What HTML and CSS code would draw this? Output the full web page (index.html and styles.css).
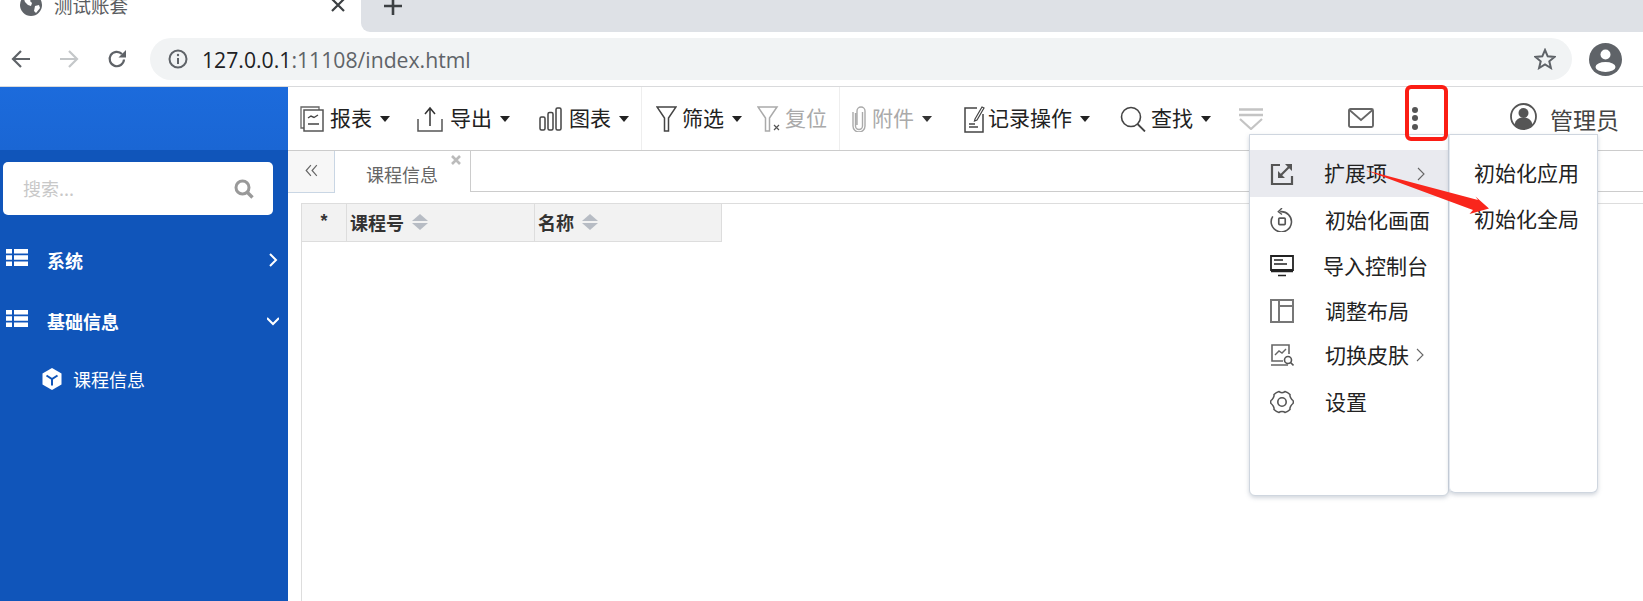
FILE: index.html
```html
<!DOCTYPE html>
<html lang="zh">
<head>
<meta charset="utf-8">
<title>测试账套</title>
<link rel="stylesheet" href="styles.css">
</head>
<body>
<header class="chrome">
  <div class="tabstrip">
    <div class="btab">
      <svg class="globe" viewBox="0 0 22 22"><circle cx="11" cy="11" r="11" fill="#5f6368"/><path d="M4 5l5-3 3 2-2 3 2 2-1 3-3-1-3-3zM15 12l4-1 1 3-4 5-2-2z" fill="#fff"/></svg>
      <span class="btab-title">测试账套</span>
      <svg class="btab-x" viewBox="0 0 14 14"><path d="M1 1l12 12M13 1L1 13" stroke="#3c4043" stroke-width="2.2" fill="none"/></svg>
    </div>
    <div class="strip-rest">
      <svg class="plus" viewBox="0 0 18 18"><path d="M9 0v18M0 9h18" stroke="#3c4043" stroke-width="2.6" fill="none"/></svg>
    </div>
  </div>
  <div class="navbar">
    <svg class="nav-ic" viewBox="0 0 20 20"><path d="M19 10H2M10 2l-8 8 8 8" stroke="#5f6368" stroke-width="2.2" fill="none"/></svg>
    <svg class="nav-ic nav-fwd" viewBox="0 0 20 20"><path d="M1 10h17M10 2l8 8-8 8" stroke="#c4c7c9" stroke-width="2.2" fill="none"/></svg>
    <svg class="nav-ic nav-reload" viewBox="0 0 20 20"><path d="M17 10.500a7.200 7.200 0 1 1-2-5.500" stroke="#5f6368" stroke-width="2.200" fill="none"/><path d="M19 1v7.500h-7.500z" fill="#5f6368"/></svg>
    <div class="omnibox">
      <svg class="info" viewBox="0 0 20 20"><circle cx="10" cy="10" r="8.500" stroke="#5f6368" stroke-width="2" fill="none"/><path d="M10 9v6" stroke="#5f6368" stroke-width="2"/><circle cx="10" cy="6" r="1.200" fill="#5f6368"/></svg>
      <span class="url"><span class="url-host">127.0.0.1</span>:11108/index.html</span>
      <svg class="star" viewBox="0 0 22 22"><path d="M11 2l2.700 6.300 6.800.6-5.200 4.400 1.600 6.700L11 16.400 5.100 20l1.600-6.700L1.500 8.900l6.800-.6z" stroke="#5f6368" stroke-width="2" fill="none"/></svg>
    </div>
    <svg class="avatar" viewBox="0 0 33 33"><circle cx="16.500" cy="16.500" r="16.500" fill="#5f6368"/><circle cx="16.500" cy="11.500" r="5" fill="#fff"/><ellipse cx="16.500" cy="24" rx="10" ry="5" fill="#fff"/></svg>
  </div>
</header>

<div class="app">
  <aside class="sidebar">
    <div class="side-head"></div>
    <div class="side-body">
      <div class="search">
        <span class="search-ph">搜索...</span>
        <svg class="search-ic" viewBox="0 0 20 20"><circle cx="8.500" cy="8.500" r="6.500" stroke="#999" stroke-width="3" fill="none"/><path d="M13.500 13.500l5 5" stroke="#999" stroke-width="3.400"/></svg>
      </div>
      <div class="nav-item">
        <svg class="list-ic" viewBox="0 0 22 17"><path d="M0 0h6v4.500H0zM8 0h14v4.500H8zM0 6.200h6v4.500H0zM8 6.200h14v4.500H8zM0 12.400h6V17H0zM8 12.400h14V17H8z" fill="#fff"/></svg>
        <span class="nav-label">系统</span>
        <svg class="chev" viewBox="0 0 12 14"><path d="M3 1l6 6-6 6" stroke="#fff" stroke-width="2" fill="none"/></svg>
      </div>
      <div class="nav-item">
        <svg class="list-ic" viewBox="0 0 22 17"><path d="M0 0h6v4.500H0zM8 0h14v4.500H8zM0 6.200h6v4.500H0zM8 6.200h14v4.500H8zM0 12.400h6V17H0zM8 12.400h14V17H8z" fill="#fff"/></svg>
        <span class="nav-label">基础信息</span>
        <svg class="chev" viewBox="0 0 12 14"><path d="M0 4l6 6 6-6" stroke="#fff" stroke-width="2" fill="none"/></svg>
      </div>
      <div class="nav-sub">
        <svg class="cube" viewBox="0 0 20 22"><path d="M10 0l9.500 5.500v11L10 22 .5 16.500v-11z" fill="#fff"/><path d="M4.500 7.500L10 11l5.500-3.500M10 11v6.500" stroke="#1055ba" stroke-width="2" fill="none"/></svg>
        <span>课程信息</span>
      </div>
    </div>
  </aside>

  <main class="main">
    <div class="toolbar">
      <div class="tool">
        <svg class="tic tic-report" viewBox="0 0 24 26"><path d="M4 22H1V1h18v3" stroke="#666" stroke-width="1.300" fill="none"/><path d="M4 4h19v21H4z" stroke="#555" stroke-width="1.500" fill="#fff"/><path d="M8 12l3-2 3 1.500 4-2.500M8 18h11" stroke="#444" stroke-width="1.400" fill="none"/></svg>
        <span>报表</span><i class="caret"></i>
      </div>
      <div class="tool t-export">
        <svg class="tic tic-export" viewBox="0 0 26 26"><path d="M1 13v12h24V13" stroke="#555" stroke-width="1.500" fill="none"/><path d="M13 20V3M8 8l5-6 5 6" stroke="#333" stroke-width="1.500" fill="none"/></svg>
        <span>导出</span><i class="caret"></i>
      </div>
      <div class="tool t-chart">
        <svg class="tic tic-chart" viewBox="0 0 23 24"><rect x="1" y="10" width="5" height="13" rx="1.500" stroke="#444" stroke-width="1.500" fill="none"/><rect x="9" y="5.500" width="5" height="17.500" rx="1.500" stroke="#444" stroke-width="1.500" fill="none"/><rect x="17" y="1" width="5" height="22" rx="1.500" stroke="#444" stroke-width="1.500" fill="none"/></svg>
        <span>图表</span><i class="caret"></i>
      </div>
      <div class="tool-sep t-sep1"></div>
      <div class="tool t-filter">
        <svg class="tic tic-filter" viewBox="0 0 21 26"><path d="M1 1h19l-7.500 11v13h-4V12z" stroke="#444" stroke-width="1.500" fill="none"/></svg>
        <span>筛选</span><i class="caret"></i>
      </div>
      <div class="tool t-reset muted">
        <svg class="tic tic-reset" viewBox="0 0 23 26"><path d="M1 1h19l-7.500 11v13h-4V12z" stroke="#aaa" stroke-width="1.500" fill="none"/><path d="M17 19l5 5M22 19l-5 5" stroke="#555" stroke-width="1.200"/></svg>
        <span>复位</span>
      </div>
      <div class="tool-sep t-sep2"></div>
      <div class="tool t-attach muted">
        <svg class="tic tic-attach" viewBox="0 0 14 26"><path d="M3.500 7v13a3.500 3.500 0 0 0 7 0V6M1 6v14a6 6 0 0 0 12 0V5a4 4 0 0 0-8 0v14" stroke="#aaa" stroke-width="1.400" fill="none"/></svg>
        <span>附件</span><i class="caret"></i>
      </div>
      <div class="tool t-record">
        <svg class="tic tic-record" viewBox="0 0 21 28"><path d="M13 3H1v24h18V9" stroke="#444" stroke-width="1.500" fill="none"/><path d="M11 14l7-12 2 1-7 12-2.500 1z" stroke="#444" stroke-width="1.200" fill="#fff"/><path d="M5 19h6M5 22h9" stroke="#444" stroke-width="1.500"/></svg>
        <span>记录操作</span><i class="caret"></i>
      </div>
      <div class="tool t-find">
        <svg class="tic tic-find" viewBox="0 0 26 26"><circle cx="11" cy="11" r="9.500" stroke="#444" stroke-width="1.600" fill="none"/><path d="M17.500 18l7.500 7.500" stroke="#444" stroke-width="1.800"/></svg>
        <span>查找</span><i class="caret"></i>
      </div>
      <svg class="tic tic-more t-more" viewBox="0 0 26 22"><path d="M1 1.500h24M1 7h24" stroke="#c4c4c4" stroke-width="2.400"/><path d="M2 11l11 10 11-10" stroke="#c4c4c4" stroke-width="2.200" fill="none"/></svg>
      <svg class="tic tic-mail t-mail" viewBox="0 0 26 20"><rect x="1" y="1" width="24" height="18" rx="1.500" stroke="#666" stroke-width="1.900" fill="none"/><path d="M1.500 2l11.500 10L24.500 2" stroke="#666" stroke-width="1.700" fill="none"/></svg>
      <div class="dots"><i></i><i></i><i></i></div>
      <svg class="tic tic-user t-user" viewBox="0 0 27 27"><circle cx="13.500" cy="13.500" r="12.500" stroke="#555" stroke-width="1.800" fill="#fff"/><circle cx="13.500" cy="10" r="5" fill="#555"/><path d="M4.500 22c1-6 5-7.500 9-7.500s8 1.500 9 7.500a12.500 12.500 0 0 1-18 0z" fill="#555"/></svg>
      <span class="user-name">管理员</span>
    </div>

    <div class="tabs">
      <div class="collapse">
        <svg viewBox="0 0 11 11"><path d="M5 1L1 5.500 5 10M10 1L6 5.500l4 4.500" stroke="#666" stroke-width="1" fill="none"/></svg>
      </div>
      <div class="tab">
        <span>课程信息</span>
        <svg class="tab-x" viewBox="0 0 10 10"><path d="M1 1l8 8M9 1L1 9" stroke="#bbb" stroke-width="2.600" fill="none"/></svg>
      </div>
      <div class="tabs-rest"></div>
    </div>

    <div class="grid-wrap">
      <div class="grid-head">
        <div class="cell cell-star">*</div>
        <div class="cell cell-code">课程号<span class="sort"><i class="up"></i><i class="down"></i></span></div>
        <div class="cell cell-name">名称<span class="sort"><i class="up"></i><i class="down"></i></span></div>
      </div>
    </div>
  </main>

  <nav class="menu menu-main">
    <div class="mrow active">
      <svg class="mic" viewBox="0 0 24 24"><path d="M10 3H2v19h20v-8" stroke="#555" stroke-width="2.200" fill="none"/><path d="M9 15L21 3" stroke="#555" stroke-width="2.200"/><path d="M15 2h7v7zM8 9v7h7z" fill="#555"/></svg>
      <span class="mtext mtext-l1">扩展项</span>
      <svg class="msub" viewBox="0 0 8 14"><path d="M1 1l6 6-6 6" stroke="#666" stroke-width="1.100" fill="none"/></svg>
    </div>
    <div class="mrow">
      <svg class="mic" viewBox="0 0 24 26"><path d="M10 4a11 11 0 1 1-8 5" stroke="#555" stroke-width="1.700" fill="none"/><path d="M12 0L8 4l4 3" stroke="#555" stroke-width="1.500" fill="none"/><rect x="8.500" y="11" width="7" height="7" rx="1" stroke="#555" stroke-width="1.800" fill="none"/></svg>
      <span class="mtext">初始化画面</span>
    </div>
    <div class="mrow">
      <svg class="mic" viewBox="0 0 24 22"><path d="M1 1h22v14H1z" stroke="#222" stroke-width="1.800" fill="none"/><path d="M4 5h9M4 9h13M1 16.500h22M8 20.500h8" stroke="#222" stroke-width="1.600"/></svg>
      <span class="mtext mtext-l3">导入控制台</span>
    </div>
    <div class="mrow mrow-tight">
      <svg class="mic" viewBox="0 0 24 24"><path d="M1 1h22v22H1zM9 1v22M9 7h14" stroke="#777" stroke-width="2" fill="none"/></svg>
      <span class="mtext">调整布局</span>
    </div>
    <div class="mrow mrow-tight">
      <svg class="mic" viewBox="0 0 24 24"><path d="M19 11V2H2v16h11M1 22h17" stroke="#666" stroke-width="1.600" fill="none"/><path d="M5 12l4-4 3 2 4-4" stroke="#666" stroke-width="1.400" fill="none"/><circle cx="18" cy="17" r="3.500" stroke="#555" stroke-width="1.600" fill="none"/><path d="M20.500 19.500l3 3" stroke="#555" stroke-width="1.600"/></svg>
      <span class="mtext">切换皮肤</span>
      <svg class="msub" viewBox="0 0 8 14"><path d="M1 1l6 6-6 6" stroke="#666" stroke-width="1.100" fill="none"/></svg>
    </div>
    <div class="mrow mrow-last">
      <svg class="mic" viewBox="0 0 24 24"><path d="M9 1.500c1 1.500 5 1.500 6 0 2 .5 3.500 1.500 5 3-.5 2 1.500 5 3 6 .5 1 .5 2 0 3-1.500 1-3.500 4-3 6-1.500 1.500-3 2.500-5 3-1-1.500-5-1.500-6 0-2-.5-3.500-1.500-5-3 .5-2-1.500-5-3-6-.5-1-.5-2 0-3 1.500-1 3.500-4 3-6 1.500-1.500 3-2.500 5-3z" stroke="#555" stroke-width="1.500" fill="none"/><circle cx="12" cy="12" r="4.200" stroke="#555" stroke-width="1.600" fill="none"/></svg>
      <span class="mtext">设置</span>
    </div>
  </nav>
  <nav class="menu menu-side">
    <div class="srow">初始化应用</div>
    <div class="srow">初始化全局</div>
  </nav>

  <div class="red-box"></div>
  <svg class="red-arrow" viewBox="0 0 130 50"><path d="M2 5L115 35 112.500 31.500 126 43.500 106.500 49 110 45z" fill="#f9261c"/></svg>
</div>
</body>
</html>
```
FILE: styles.css
```css
* { box-sizing: border-box; }
html, body { margin: 0; padding: 0; height: 601px; overflow: hidden; background: #fff; }
body { font-family: "Noto Sans CJK SC", "Noto Sans", sans-serif; color: #222; }
i { font-style: normal; display: block; }
svg { display: block; flex: none; }

/* browser chrome */
.chrome { height: 87px; border-bottom: 1px solid #d9dadc; }
.tabstrip { display: flex; height: 32px; }
.btab { width: 361px; display: flex; align-items: center; position: relative; padding-left: 20px; height: 32px; margin-top: -11px; }
.globe { width: 22px; height: 22px; }
.btab-title { margin-left: 12px; font-size: 18.500px; color: #5a5d61; line-height: 22px; }
.btab-x { width: 14px; height: 14px; margin-left: 203px; }
.strip-rest { flex: 1; background: #dee1e6; border-bottom-left-radius: 9px; padding: 0 0 0 23px; }
.plus { width: 18px; height: 18px; margin-top: -3px; }
.navbar { display: flex; align-items: center; height: 54px; padding-left: 11px; }
.nav-ic { width: 20px; height: 20px; }
.nav-fwd { margin-left: 28px; }
.nav-reload { margin-left: 28px; }
.omnibox { width: 1422px; height: 42px; margin-left: 23px; background: #f1f3f4; border-radius: 21px; display: flex; align-items: center; padding-left: 18px; }
.info { width: 20px; height: 20px; }
.url { margin-left: 14px; font-family: "Open Sans", sans-serif; font-size: 21.200px; color: #5f6368; white-space: nowrap; }
.url-host { color: #202124; }
.star { width: 22px; height: 22px; margin-left: auto; margin-right: 16px; }
.avatar { width: 33px; height: 33px; margin-left: 17px; }

/* app */
.app { position: relative; display: flex; height: 514px; }
.sidebar { width: 288px; display: flex; flex-direction: column; }
.side-head { height: 63px; background: linear-gradient(#1c6bdc, #1a66d4); }
.side-body { flex: 1; background: #1055ba; padding: 12px 3px 0 0; }
.search { margin-left: 3px; margin-bottom: 14px; width: 270px; height: 53px; background: #fff; border-radius: 5px; display: flex; align-items: center; padding: 0 19px 0 20px; justify-content: space-between; }
.search-ph { font-size: 18px; color: #c8c8c8; margin-top: -2px; }
.search-ic { width: 20px; height: 20px; }
.nav-item { display: flex; align-items: center; height: 61px; padding-left: 6px; color: #fff; }
.list-ic { width: 22px; height: 17px; margin-top: -4px; }
.nav-label { margin-left: 19px; font-size: 18px; font-weight: 700; }
.chev { width: 12px; height: 14px; margin-left: auto; margin-right: 6px; }
.nav-sub { display: flex; align-items: center; padding-left: 42px; height: 56px; color: #fff; font-size: 18px; }
.cube { width: 20px; height: 22px; margin-right: 11px; }

/* main */
.main { flex: 1; min-width: 0; display: flex; flex-direction: column; }
.toolbar { height: 64px; border-bottom: 1px solid #ccc; display: flex; align-items: center; padding-left: 12px; font-size: 21px; color: #222; }
.tool { display: flex; align-items: center; white-space: nowrap; }
.tool span { line-height: 30px; margin-bottom: 4px; }
.tic { height: auto; }
.caret { width: 0; height: 0; border-left: 5px solid transparent; border-right: 5px solid transparent; border-top: 6px solid #222; margin-left: 8px; }
.muted { color: #aaa; }
.muted .caret { border-top-color: #333; }
.tool-sep { width: 1px; height: 63px; background: #eee; }
.tic-report { width: 24px; margin-right: 6px; }
.tic-export { width: 26px; margin-right: 7px; }
.tic-chart { width: 23px; margin-right: 7px; }
.tic-filter { width: 21px; margin-right: 5px; }
.tic-reset { width: 23px; margin-right: 5px; }
.tic-attach { width: 14px; margin-right: 6px; }
.tic-record { width: 21px; margin-right: 3px; }
.tic-find { width: 26px; margin-right: 5px; }
.t-export { margin-left: 27px; }
.t-chart { margin-left: 29px; }
.t-sep1 { margin-left: 12px; }
.t-filter { margin-left: 14px; }
.t-reset { margin-left: 15px; }
.t-sep2 { margin-left: 12px; }
.t-attach { margin-left: 12px; }
.t-record { margin-left: 32px; }
.t-find { margin-left: 30px; }
.tic-more { width: 26px; }
.t-more { margin-left: 27px; }
.tic-mail { width: 26px; }
.t-mail { margin-left: 84px; margin-top: -1px; }
.dots { margin-left: 38px; display: flex; flex-direction: column; gap: 2.500px; margin-top: -1px; }
.dots i { width: 6px; height: 6px; border-radius: 50%; background: #555; }
.tic-user { width: 27px; }
.t-user { margin-left: 92px; margin-top: -4px; }
.user-name { margin-left: 13px; font-size: 23px; color: #444; }

.tabs { height: 41px; display: flex; flex: none; }
.collapse { width: 47px; height: 42px; background: #f7f7f7; border-right: 1px solid #c9d6e4; border-bottom: 1px solid #c9d6e4; display: flex; align-items: center; justify-content: center; position: relative; z-index: 1; }
.collapse svg { width: 13px; height: 13px; margin-top: -2px; }
.tab { width: 136px; border-right: 1px solid #ccc; display: flex; align-items: center; padding: 4px 0 0 31px; font-size: 18px; color: #666; position: relative; }
.tab-x { position: absolute; right: 9px; top: 4px; width: 10px; height: 10px; }
.tabs-rest { flex: 1; border-bottom: 1px solid #ccc; }

.grid-wrap { flex: 1; margin: 11px 0 0 13px; border-top: 1px solid #ddd; border-left: 1px solid #ddd; }
.grid-head { display: flex; width: 420px; height: 38px; background: #f2f2f2; border-right: 1px solid #ddd; border-bottom: 1px solid #ddd; }
.cell { display: flex; align-items: center; font-size: 18px; font-weight: 700; color: #333; padding-bottom: 2px; }
.cell-star { width: 45px; justify-content: center; border-right: 1px solid #ddd; font-family: "Liberation Sans", sans-serif; }
.cell-code { width: 188px; padding-left: 3px; border-right: 1px solid #ddd; }
.cell-name { flex: 1; padding-left: 3px; }
.sort { display: flex; flex-direction: column; gap: 2px; margin-left: 8px; }
.sort .up { border-left: 8px solid transparent; border-right: 8px solid transparent; border-bottom: 7px solid #b7bcc4; }
.sort .down { border-left: 8px solid transparent; border-right: 8px solid transparent; border-top: 7px solid #b7bcc4; }

/* popup menus */
.menu { position: absolute; background: #fff; border: 1px solid #cfd6df; border-radius: 0 0 6px 6px; box-shadow: 0 2px 4px rgba(120, 135, 155, .35); font-size: 21px; color: #222; }
.menu-main { left: 1249px; top: 47px; width: 200px; height: 362px; padding-top: 15px; }
.menu-side { left: 1449px; top: 47px; width: 149px; height: 359px; padding: 15px 0 0 24px; border-left: 1px solid #e3e8ef; }
.mrow { display: flex; align-items: center; height: 46px; padding-left: 20px; }
.mrow.active { background: #e9eaef; height: 47px; }
.mrow-tight { height: 44px; }
.mrow-last { height: 50px; }
.mic { width: 24px; height: 24px; }
.mtext { margin-left: 31px; margin-bottom: 3px; white-space: nowrap; }
.mtext-l1 { margin-left: 30px; }
.mtext-l3 { margin-left: 29px; }
.msub { width: 8px; height: 14px; margin-left: 7px; }
.mrow.active .msub { margin-left: 30px; }
.srow { height: 46px; line-height: 45px; white-space: nowrap; }

.red-box { position: absolute; left: 1405px; top: -2px; width: 43px; height: 56px; border: 4px solid #fb1d14; border-radius: 6px; }
.red-arrow { position: absolute; left: 1363px; top: 78px; width: 130px; height: 50px; }
```
